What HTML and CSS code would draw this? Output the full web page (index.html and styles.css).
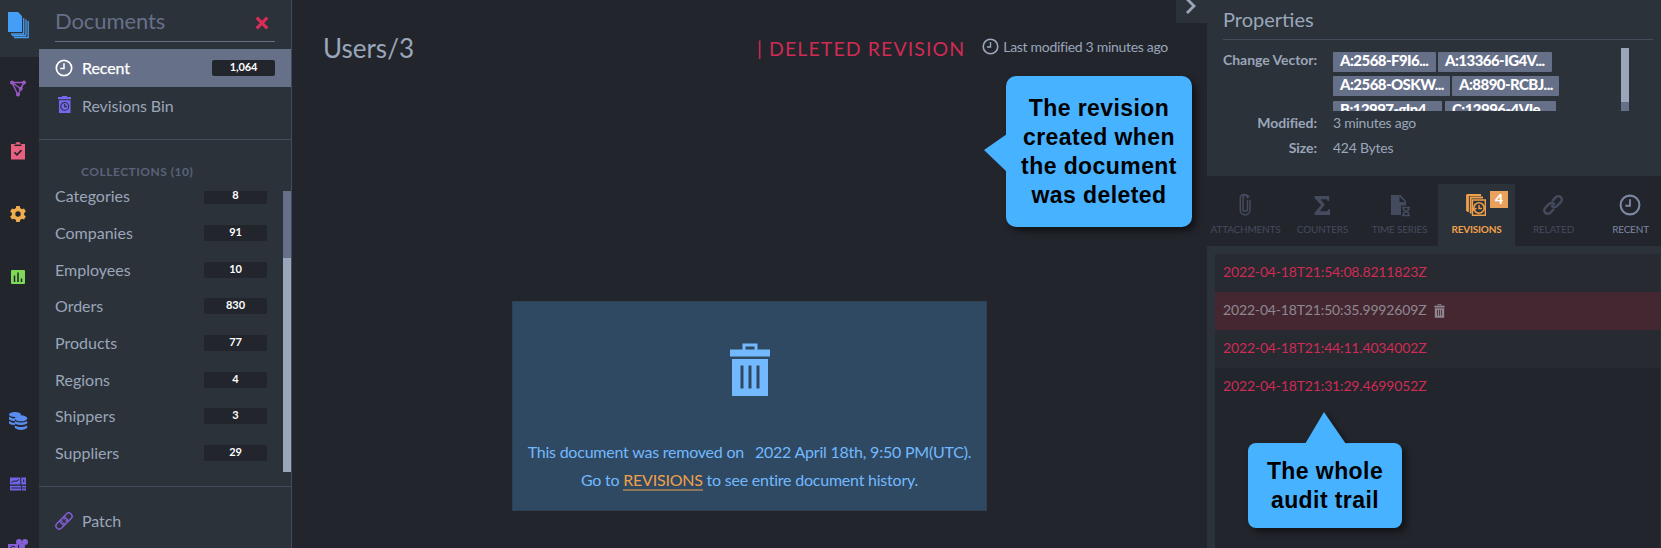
FILE: index.html
```
<!DOCTYPE html>
<html lang="en">
<head>
<meta charset="utf-8">
<title>Users/3</title>
<link rel="stylesheet" href="styles.css">
</head>
<body>
<svg width="0" height="0" class="defs">
  <symbol id="clock" viewBox="0 0 18 18"><circle cx="9" cy="9" r="7.7" fill="none" stroke="currentColor" stroke-width="1.7"/><path d="M9 4.2V9.6H5.2" fill="none" stroke="currentColor" stroke-width="1.5"/></symbol>
  <symbol id="trash" viewBox="0 0 42 54"><path fill="currentColor" fill-rule="evenodd" d="M13.5 6.5V.5h15v6H41v7H1v-7zM16.500 6.500h9v-3h-9zM3 16h36v37H3zM11.500 22.500v23h3v-23zM19.500 22.500v23h3v-23zM27.500 22.500v23h3v-23z"/></symbol>
</svg>
<div class="app">
  <nav class="rail">
    <a class="rail-item active"><svg width="22" height="28" viewBox="0 0 22 28"><path fill="#459ef5" d="M1 1h10l4 4v16H1z"/><path fill="none" stroke="#459ef5" stroke-width="1.300" d="M16.700 7v16H4M19 8.500v15.700M21.200 10v16.500H7M19 24.700H5"/></svg></a>
    <a class="rail-item"><svg width="18" height="18" viewBox="0 0 18 18"><g stroke="#9b59c4" stroke-width="1.400" fill="none"><path d="M3 3.500h12L9 16zM3 3.500l8.500 6M15 3.500l-3.500 6"/></g><g fill="#9b59c4"><circle cx="3" cy="3.500" r="2"/><circle cx="15" cy="3.500" r="2"/><circle cx="11.700" cy="9.700" r="2"/><circle cx="9" cy="15.500" r="2"/></g></svg></a>
    <a class="rail-item"><svg width="16" height="18" viewBox="0 0 16 18"><path fill="#e8607d" d="M1 2h4.500a2.500 2 0 0 1 5 0H15v15.500H1z"/><path d="M4.500 3.300h7" stroke="#22252c" stroke-width="1.500"/><path d="M4.500 10.300l2.500 2.500 4.500-4.600" fill="none" stroke="#22252c" stroke-width="1.700"/></svg></a>
    <a class="rail-item"><svg width="18" height="18" viewBox="0 0 18 18"><g fill="#f0ad4e"><circle cx="9" cy="9" r="6.200"/><path id="tooth" d="M6.700 4L7.200 1h3.600l.5 3v10l-.5 3H7.200l-.5-3z"/><use href="#tooth" transform="rotate(60 9 9)"/><use href="#tooth" transform="rotate(120 9 9)"/></g><circle cx="9" cy="9" r="2.700" fill="#22252c"/></svg></a>
    <a class="rail-item"><svg width="16" height="16" viewBox="0 0 16 16"><rect x="1" y="1" width="14" height="14" rx="1" fill="#7ed957"/><path d="M4.500 6.500V13M8 3.500V13M11.500 9.500V13" stroke="#22252c" stroke-width="1.500"/></svg></a>
    <a class="rail-item low"><svg width="20" height="20" viewBox="0 0 20 20"><g fill="#5a8df0"><ellipse cx="7" cy="3.500" rx="6" ry="2.500"/><path d="M1 5.500q3 2.300 6 2v2.500q-4 0-6-1.500zM1 10q3 2 6 2v2q-4 0-6-1.500z"/><ellipse cx="13" cy="7.300" rx="6.200" ry="3"/><path d="M6.800 10q6.200 3 12.400 0v2.500q-6.200 3-12.400 0zM6.800 14.400q6.200 3 12.400 0v2.600q-6.200 4-12.400 0z"/></g></svg></a>
    <a class="rail-item"><svg width="18" height="14" viewBox="0 0 18 14"><path fill="#7063e8" d="M1 .5h10.300v7H1zM12.300.5H17v7h-4.700zM1 8.700h16v4.800H1z"/><path d="M2.500 5.500l2.500-1.700 2 .7L10 2.500M2.300 11h9.500M12.700 8.700v5M13.500 11h3M14.700 2.500v2.700" fill="none" stroke="#22252c" stroke-width="1"/></svg></a>
    <a class="rail-item"><svg width="20" height="18" viewBox="0 0 20 18"><g fill="#8460d8"><circle cx="11" cy="4" r="3"/><circle cx="17" cy="4" r="3"/><circle cx="14" cy="8.500" r="3"/><path d="M0 6h10v10H0z"/></g><path d="M2 10l3-2 2 1" fill="none" stroke="#22252c"/></svg></a>
  </nav>

  <aside class="side">
    <header class="side-head"><span>Documents</span><svg width="14" height="14" viewBox="0 0 14 14"><path d="M1.700 1.700l10.600 10.600M12.300 1.700L1.700 12.300" stroke="#d92c59" stroke-width="3.200"/></svg></header>
    <a class="side-row selected"><svg class="ic" width="18" height="18"><use href="#clock"/></svg><span>Recent</span><b class="badge">1,064</b></a>
    <a class="side-row"><svg class="ic bin" width="18" height="18" viewBox="0 0 18 18"><path fill="#7369f0" d="M3 1h4V0h5v1h4v2.300H3zM4 4.300h11.500V17H4z"/><circle cx="9.700" cy="10.400" r="3.900" fill="none" stroke="#2c3239" stroke-width="1.100"/><path d="M9.700 8v2.700H12" fill="none" stroke="#2c3239" stroke-width="1.200"/></svg><span>Revisions Bin</span></a>
    <div class="side-title">COLLECTIONS (10)</div>
    <div class="collections">
      <ul>
        <li>Categories<b class="badge">8</b></li>
        <li>Companies<b class="badge">91</b></li>
        <li>Employees<b class="badge">10</b></li>
        <li>Orders<b class="badge">830</b></li>
        <li>Products<b class="badge">77</b></li>
        <li>Regions<b class="badge">4</b></li>
        <li>Shippers<b class="badge">3</b></li>
        <li>Suppliers<b class="badge">29</b></li>
      </ul>
      <div class="track"></div>
    </div>
    <a class="side-row patch"><svg class="ic" width="18" height="18" viewBox="0 0 18 18"><g transform="rotate(-45 9 9)" fill="none" stroke="#8460d8" stroke-width="1.400"><rect x="-1" y="5.700" width="20" height="6.600" rx="3.300"/><path d="M5.700 5.700v6.600M12.300 5.700v6.600"/></g><g transform="rotate(-45 9 9)" fill="#8460d8"><circle cx="7.500" cy="7.600" r=".9"/><circle cx="10.500" cy="7.600" r=".9"/><circle cx="7.500" cy="10.400" r=".9"/><circle cx="10.500" cy="10.400" r=".9"/></g></svg><span>Patch</span></a>
  </aside>

  <main class="main">
    <header class="doc-head">
      <h1>Users/3</h1>
      <span class="deleted">| DELETED REVISION</span>
      <svg class="clock" width="17" height="17"><use href="#clock"/></svg>
      <span class="modified">Last modified 3 minutes ago</span>
    </header>
    <section class="notice">
      <svg width="42" height="54"><use href="#trash"/></svg>
      <p class="when">This document was removed on <span>2022 April 18th, 9:50 PM(UTC).</span></p>
      <p class="go">Go to <a>REVISIONS</a> to see entire document history.</p>
    </section>
    <div class="collapse"><svg width="12" height="16" viewBox="0 0 12 16"><path d="M2 1l7 7-7 7" fill="none" stroke="#9aa6ba" stroke-width="2.800"/></svg></div>
  </main>

  <aside class="props">
    <section class="info">
      <h2>Properties</h2>
      <dl>
        <dt>Change Vector:</dt>
        <dd class="vector">
          <div class="tags">
            <div><b class="t1">A:2568-F9I6...</b><b class="t2">A:13366-IG4V...</b></div>
            <div><b class="t3">A:2568-OSKW...</b><b class="t4">A:8890-RCBJ...</b></div>
            <div class="third"><b class="t5">B:12997-gIn4...</b><b class="t6">C:12996-4VIe...</b></div>
          </div>
          <div class="track"></div>
        </dd>
        <dt>Modified:</dt><dd>3 minutes ago</dd>
        <dt>Size:</dt><dd>424 Bytes</dd>
      </dl>
    </section>
    <nav class="tabs">
      <a><svg width="24" height="24" viewBox="0 0 24 24"><path d="M14.500 7v9a2 2 0 0 1-4.500 0V5.500a3 3 0 0 1 6-1M17 7v10a4.800 4.800 0 0 1-9.700 0V5.500q0-4 3.500-4t3.600 4" fill="none" stroke="currentColor" stroke-width="1.500"/></svg><span>ATTACHMENTS</span></a>
      <a><svg width="24" height="24" viewBox="0 0 24 24"><path fill="currentColor" d="M4.500 3h14.700v5h-1.500l-1-1.700h-6l4 5.400-5 6.500h7.500l1.200-2H20V22H4.500v-2l6.500-8-6.500-7z"/></svg><span>COUNTERS</span></a>
      <a><svg width="24" height="24" viewBox="0 0 24 24"><path fill="currentColor" fill-rule="evenodd" d="M4 2h9.500L19 8v4.500h-5V22H4zM12.500 3.500V9H18z"/><path d="M15 14.500h8M15 22.500h8M16.500 15v2l5 3v2.500M21.500 15v2l-5 3v2.500" stroke="currentColor" stroke-width="1.500" fill="none"/></svg><span>TIME SERIES</span></a>
      <a class="on"><svg width="24" height="24" viewBox="0 0 24 24"><path d="M4 19V2h13M6.700 20.500V4.500H19M3 18V1.500" fill="none" stroke="currentColor" stroke-width="1.800"/><path d="M8.500 22.300V7h12.800v15.300z" fill="none" stroke="currentColor" stroke-width="1.400"/><circle cx="15" cy="15" r="5.200" fill="#2c3239" stroke="currentColor" stroke-width="1.600"/><path d="M15 12v3.500h3M8 14.500l2 2.500 2.500-2" fill="none" stroke="currentColor" stroke-width="1.400"/></svg><span>REVISIONS</span><b class="count">4</b></a>
      <a><svg width="24" height="24" viewBox="0 0 24 24"><g transform="rotate(-45 12 12)" fill="none" stroke="currentColor" stroke-width="2.400"><path d="M10 15.500H4.500a3.500 3.500 0 0 1 0-7H10a3.500 3.500 0 0 1 3.300 4.500M14 8.500h5.500a3.500 3.500 0 0 1 0 7H14a3.500 3.500 0 0 1-3.300-4.500"/></g></svg><span>RELATED</span></a>
      <a class="recent"><svg width="22" height="22"><use href="#clock"/></svg><span>RECENT</span></a>
    </nav>
    <section class="revisions">
      <ol>
        <li>2022-04-18T21:54:08.8211823Z</li>
        <li class="current">2022-04-18T21:50:35.9992609Z<svg width="11" height="14"><use href="#trash"/></svg></li>
        <li>2022-04-18T21:44:11.4034002Z</li>
        <li>2022-04-18T21:31:29.4699052Z</li>
      </ol>
    </section>
  </aside>
</div>

<div class="callout created"><svg width="23" height="38"><path d="M23 0v38L0 16z"/></svg>The revision<br>created when<br>the document<br>was deleted</div>
<div class="callout trail"><svg width="41" height="32"><path d="M0 32h41L19 0z"/></svg>The whole<br>audit trail</div>
</body>
</html>
```
FILE: styles.css
```
* { box-sizing: border-box; }
body { margin: 0; overflow: hidden; background: #22252c; color: #9aa6ba; font: 16px/20px Lato, sans-serif; }
h1, h2, p, dl, dd, ul, ol { margin: 0; padding: 0; font-weight: 400; list-style: none; }
svg { display: block; flex: none; }
.defs { position: absolute; }
.app { display: flex; width: 1661px; height: 548px; overflow: hidden; }

.rail { width: 39px; flex: none; background: #22252c; }
.rail-item { height: 63px; padding: 0 3px 2px 0; display: flex; align-items: center; justify-content: center; }
.rail-item.active { height: 57px; padding: 0 3px 7px 0; background: #2c3239; }
.rail-item.low { margin-top: 81px; padding-bottom: 1px; }

.side { width: 253px; flex: none; background: #2c3239; border-right: 1px solid #444b5a; }
.side-head { height: 42px; margin: 0 16px 7px; padding-right: 6px; border-bottom: 1px solid #667089; display: flex; align-items: center; justify-content: space-between; font-size: 22px; letter-spacing: -.1px; color: #667089; }
.side-head svg { margin-top: 4px; }
.side-row { height: 38px; padding: 0 16px; display: flex; align-items: center; letter-spacing: -.08px; }
.side-row .ic { margin-right: 9px; }
.side-row .bin { margin-top: -2px; }
.side-row.selected { background: #667089; color: #fff; -webkit-text-stroke: .25px #fff; }
.side-row .badge { margin-left: auto; }
.badge { width: 63px; height: 16px; border-radius: 2px; background: #22252c; color: #fff; font-size: 11px; line-height: 14px; letter-spacing: -.1px; text-align: center; -webkit-text-stroke: 0; }
.side-title { margin-top: 14px; border-top: 1px solid #444b5a; height: 52px; padding: 22px 0 0 42px; font-size: 12px; letter-spacing: .5px; font-weight: 700; color: #5a6379; }
.collections { height: 281px; display: flex; justify-content: space-between; overflow: hidden; }
.collections ul { width: 228px; padding-left: 16px; margin-top: -13px; }
.collections li { height: 36.7px; display: flex; align-items: center; justify-content: space-between; }
.track { width: 8px; height: 281px; background: linear-gradient(#667089 67px, #9aa6ba 67px); }
.patch { margin-top: 14px; border-top: 1px solid #444b5a; height: 68px; }

.main { width: 915px; flex: none; position: relative; }
.doc-head { height: 96px; padding: 0 39px 0 31px; display: flex; align-items: center; }
.doc-head h1 { font-size: 26px; flex: 1; }
.deleted { font-size: 19.500px; letter-spacing: 1.100px; color: #cf2b54; margin: 1px 17px 0 0; }
.doc-head .clock { margin: -4px 4px 0 0; }
.modified { font-size: 14px; letter-spacing: -.3px; margin-top: -2px; }
.notice { width: 475px; height: 210px; margin: 205px 0 0 220px; padding-top: 41px; background: #2f4962; border: 1px solid #2d3f52; color: #72b9ff; display: flex; flex-direction: column; align-items: center; letter-spacing: -.22px; }
.when { margin-top: 45px; height: 28px; }
.when span { margin-left: 7px; }
.go a { color: #f0a04b; border-bottom: 2px solid #8f7558; }
.collapse { position: absolute; top: 0; right: 0; width: 31px; height: 23px; background: #2c3239; padding: 0 0 0 9px; }
.collapse svg { margin-top: -2px; }

.props { width: 454px; flex: none; }
.info { height: 176px; background: #2c3239; padding: 0 8px 0 16px; }
.info h2 { height: 40px; border-bottom: 1px solid #444b5a; font-size: 20px; line-height: 39px; }
.info dl { display: grid; grid-template-columns: 94px 1fr; column-gap: 16px; grid-template-rows: 71px 25px 25px; font-size: 14px; letter-spacing: -.25px; }
.info dt { text-align: right; font-weight: 700; letter-spacing: -.05px; white-space: nowrap; line-height: 23px; }
.info dd { line-height: 23px; }
.info dt:first-child { padding-top: 8px; }
.info .vector { height: 63px; margin-top: 8px; display: flex; justify-content: space-between; overflow: hidden; padding-right: 24px; }
.info .vector .track { height: 63px; background: linear-gradient(#9aa6ba 54px, #667089 54px); }
.tags { padding-top: 4px; }
.tags div { display: flex; gap: 2px; height: 20px; margin-bottom: 4px; }
.tags .third { margin-top: 5px; gap: 3px; }
.tags b { background: #667089; color: #fff; border-radius: 1px; padding-left: 7px; font-size: 15px; line-height: 17px; font-weight: 900; letter-spacing: -.55px; white-space: nowrap; }
.t1 { width: 103px; } .t2 { width: 114px; } .t3 { width: 117px; } .t4 { width: 107px; } .t5 { width: 109px; } .t6 { width: 111px; }
.tabs { height: 70px; padding-top: 8px; display: flex; }
.tabs a { position: relative; flex: none; width: 77px; padding-top: 9px; display: flex; flex-direction: column; align-items: center; color: #444b5e; font-size: 10px; letter-spacing: -.2px; }
.tabs svg { margin-left: -2px; }
.tabs span { margin-top: 2px; }
.tabs .on { background: #2c3239; color: #f0a04b; font-weight: 700; }
.tabs .recent { color: #7c87a3; padding-top: 10px; }
.tabs .recent span { margin-top: 3px; }
.count { position: absolute; left: 52px; top: 7px; width: 18px; height: 17px; background: #eaa15c; color: #fff; font: 900 14px/15px Lato, sans-serif; text-align: center; }
.revisions { height: 302px; background: #2c3239; padding: 8px 1px 0 8px; }
.revisions ol { height: 294px; background: #22252c; }
.revisions li { height: 38px; padding: 0 0 2px 8px; display: flex; align-items: center; font-size: 14px; letter-spacing: -.16px; color: #cf2b54; }
.revisions li:nth-child(odd) { background: #272a31; }
.revisions .current { background: #452732; color: #8f8790; }
.current svg { margin: 1px 0 0 8px; }

.callout { position: absolute; background: #47b2ff; color: #000; font: 700 23px/29px "Liberation Sans", Arial, sans-serif; letter-spacing: .42px; text-align: center; box-shadow: 4px 4px 6px rgba(0,0,0,.5); white-space: nowrap; }
.callout svg { position: absolute; fill: #47b2ff; }
.created { left: 1006px; top: 76px; width: 186px; height: 151px; border-radius: 10px; padding-top: 18px; }
.created svg { left: -22px; top: 58px; }
.trail { left: 1248px; top: 443px; width: 154px; height: 85px; border-radius: 8px; padding-top: 14px; }
.trail svg { left: 57px; top: -31px; filter: drop-shadow(3px 1px 2px rgba(0,0,0,.35)); clip-path: inset(0 -8px 0 0); }
```
